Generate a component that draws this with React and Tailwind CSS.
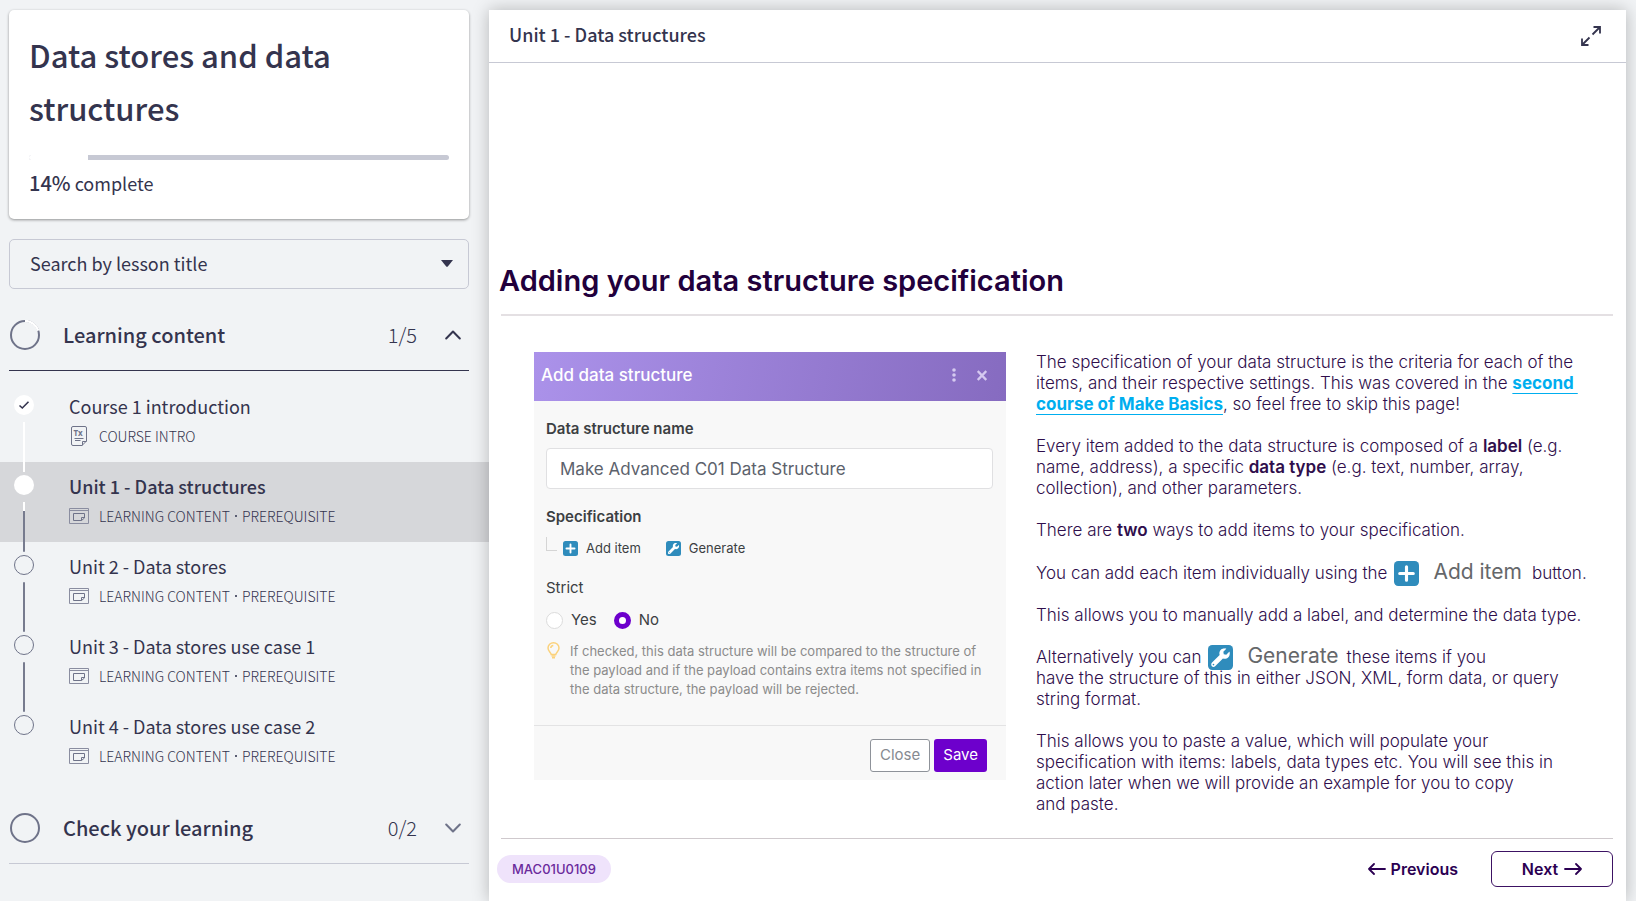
import React from "react";
import { FaWrench } from "react-icons/fa";

const prerequisite = ["LEARNING CONTENT", "PREREQUISITE"];

const lessons = [
  { title: "Course 1 introduction", tags: ["COURSE INTRO"], kind: "doc", state: "done" },
  { title: "Unit 1 - Data structures", tags: prerequisite, kind: "slide", state: "current" },
  { title: "Unit 2 - Data stores", tags: prerequisite, kind: "slide", state: "todo" },
  { title: "Unit 3 - Data stores use case 1", tags: prerequisite, kind: "slide", state: "todo" },
  { title: "Unit 4 - Data stores use case 2", tags: prerequisite, kind: "slide", state: "todo" },
];

function DocIcon() {
  return (
    <svg width="16" height="20" viewBox="0 0 16 20" fill="none" stroke="#6f7389" aria-hidden="true">
      <path d="M2 0.5H14Q15.5 0.5 15.5 2V15L11 19.5H2Q0.5 19.5 0.5 18V2Q0.5 0.5 2 0.5Z" />
      <path d="M15.5 15.5H11.5V19.5M3.5 12.5H12.5M4 14.5H9.5" />
      <text x="2.5" y="10" fontSize="8" fontWeight="700" fill="#6f7389" stroke="none" fontFamily="Noto Sans, sans-serif">Tx</text>
    </svg>
  );
}

function SlideIcon() {
  return (
    <svg width="20" height="16" viewBox="0 0 20 16" fill="none" stroke="#8a8da0" aria-hidden="true">
      <path d="M0.5 0.5H19.5V15.5H0.5ZM0.5 2.5H19.5" />
      <path d="M4.5 5.5H15.5V10L12.5 12.5H4.5ZM15.5 9.5H12.5V12.5" stroke="#6f7389" />
    </svg>
  );
}

function PlusIcon({ className }) {
  return (
    <svg className={className} viewBox="0 0 24 24" aria-hidden="true">
      <rect width="24" height="24" rx="4" fill="#2f8cbc" />
      <path d="M12 5.5V18.5M5.5 12H18.5" stroke="#fff" strokeWidth="3" strokeLinecap="round" />
    </svg>
  );
}

function WrenchIcon({ className }) {
  return (
    <svg className={className} viewBox="0 0 24 24" aria-hidden="true">
      <rect width="24" height="24" rx="4" fill="#2f8cbc" />
      <FaWrench x="3" y="3" size={18} color="#fff" />
    </svg>
  );
}

function Chevron({ up, color }) {
  return (
    <svg width="16" height="10" viewBox="0 0 16 10" fill="none" stroke={color} strokeWidth="2" strokeLinecap="round" strokeLinejoin="round" aria-hidden="true">
      <path d={up ? "M1.2 8.5L8 1.5L14.8 8.5" : "M1.2 1.5L8 8.5L14.8 1.5"} />
    </svg>
  );
}

function Arrow({ back }) {
  return (
    <svg width="18" height="12" viewBox="0 0 18 12" fill="none" stroke="#2b0052" strokeWidth="1.8" strokeLinecap="round" strokeLinejoin="round" aria-hidden="true">
      <path d={back ? "M17 6H1M6 1L1 6L6 11" : "M1 6H17M12 1L17 6L12 11"} />
    </svg>
  );
}

function SectionHeader({ title, count, open, divider }) {
  return (
    <h2 className="mr-5 ml-[9px]">
      <button type="button" aria-expanded={open} className={`flex w-full items-center border-b pt-5 pb-[19px] text-left ${divider}`}>
        <svg className="-my-1 ml-px shrink-0" width="30" height="30" viewBox="0 0 30 30" fill="none" strokeWidth="2" aria-hidden="true">
          <circle cx="15" cy="15" r="14" stroke="#6f7389" />
          {open && <path d="M15 1A14 14 0 0 1 28.3 10.7" stroke="#fff" strokeWidth="2.5" />}
        </svg>
        <span className="ml-[23px] flex-1 text-xl leading-8 font-medium">{title}</span>
        <span className="text-xl leading-8 font-light">{count}</span>
        <span className="mr-2 ml-7"><Chevron up={open} color={open ? "#34344e" : "#6f7389"} /></span>
      </button>
    </h2>
  );
}

function Marker({ state }) {
  if (state === "done") {
    return (
      <svg className="shrink-0" width="20" height="20" viewBox="0 0 20 20" fill="none" aria-hidden="true">
        <circle cx="10" cy="10" r="10" fill="#fff" />
        <path d="M5.5 10.5L8.3 13L14.5 6.8" stroke="#34344e" strokeWidth="1.6" />
      </svg>
    );
  }
  if (state === "current") return <span className="size-5 shrink-0 rounded-full bg-white" />;
  return <span className="size-5 shrink-0 rounded-full border border-[#6f7389]" />;
}

function Lesson({ lesson, last }) {
  const current = lesson.state === "current";
  return (
    <li>
      <a href="#lesson" className={`flex h-20 pl-[14px] ${current ? "bg-[#d6d7da]" : ""}`}>
        <span className="relative z-10 flex w-5 shrink-0 flex-col items-center pt-[13px]">
          <Marker state={lesson.state} />
          {!last && (
            <span className="mt-[7px] -mb-2.5 flex w-0.5 flex-1 flex-col rounded bg-[#777b8e]">
              {lesson.state === "done" && <span className="flex-1 bg-white" />}
              {current && <span className="h-[9px] bg-white" />}
            </span>
          )}
        </span>
        <span className="ml-[35px] pt-[9px]">
          <span className={`block text-lg leading-[30px] ${current ? "font-medium" : "font-normal"}`}>{lesson.title}</span>
          <span className="mt-[5px] flex h-5 items-center text-sm leading-5 font-light">
            <span className="flex w-[30px]">{lesson.kind === "doc" ? <span className="ml-0.5"><DocIcon /></span> : <SlideIcon />}</span>
            {lesson.tags.map((tag, i) => (
              <React.Fragment key={tag}>
                {i > 0 && <span className="mx-[5px]" aria-hidden="true"><svg width="2" height="2" viewBox="0 0 2 2"><rect width="2" height="2" fill="#5a5d72" /></svg></span>}
                <span>{tag}</span>
              </React.Fragment>
            ))}
          </span>
        </span>
      </a>
    </li>
  );
}

function Sidebar() {
  return (
    <aside className="w-[489px] shrink-0 pt-[10px] font-['Noto_Sans_CJK_SC',sans-serif] text-[#34344e]">
      <section className="mr-5 ml-[9px] rounded-[5px] bg-white px-5 pt-[18px] pb-[21px] shadow-[0_1px_3px_rgba(0,0,0,0.4)]">
        <h1 className="text-[31px] leading-[53px] font-medium">Data stores and data structures</h1>
        <div role="progressbar" aria-valuenow={14} aria-label="Course progress" className="mt-[21px] h-[5px] overflow-hidden rounded-full bg-[#c7c9d4]">
          <div className="h-full w-[14%] bg-white" />
        </div>
        <p className="mt-2 h-[30px] text-lg leading-[30px]"><strong className="text-xl leading-[30px] font-medium">14%</strong> complete</p>
      </section>

      <div className="relative mt-5 mr-5 ml-[9px]">
        <select aria-label="Search by lesson title" className="h-[50px] w-full appearance-none rounded-[5px] border border-[#c7c9d4] bg-transparent px-5 pb-[3px] text-lg">
          <option>Search by lesson title</option>
        </select>
        <svg className="pointer-events-none absolute top-[21px] right-4" width="12" height="7" viewBox="0 0 12 7" aria-hidden="true">
          <path d="M0 0H12L6.8 6.4Q6 7.2 5.2 6.4Z" fill="#34344e" />
        </svg>
      </div>

      <div className="mt-[10px]">
        <SectionHeader title="Learning content" count="1/5" open divider="border-[#34344e]" />
        <ul className="mt-[11px]">
          {lessons.map((l, i) => <Lesson key={l.title} lesson={l} last={i === lessons.length - 1} />)}
        </ul>
        <div className="mt-[10px]">
          <SectionHeader title="Check your learning" count="0/2" open={false} divider="border-[#c7c9d4]" />
        </div>
      </div>
    </aside>
  );
}

function DataStructureForm() {
  return (
    <form className="mt-[36px] ml-[33px] w-[472px] shrink-0 self-start bg-[#f8f8f8] text-[#3c3f43]">
      <header className="flex h-[49px] items-center bg-linear-100 from-[#ab92ea] to-[#866bc0] pr-[19px] pb-[3px] pl-[7px] text-white">
        <h3 className="flex-1 text-[17px] leading-6 font-medium">Add data structure</h3>
        <button type="button" aria-label="More options" className="mr-[21px]">
          <svg width="4" height="14" viewBox="0 0 4 14" fill="#d5c9f0" aria-hidden="true">
            <circle cx="2" cy="2" r="1.8" /><circle cx="2" cy="7" r="1.8" /><circle cx="2" cy="12" r="1.8" />
          </svg>
        </button>
        <button type="button" aria-label="Dismiss">
          <svg width="10" height="11" viewBox="0 0 10 11" stroke="#d5c9f0" strokeWidth="2.4" aria-hidden="true"><path d="M0.7 1L9.3 10M9.3 1L0.7 10" /></svg>
        </button>
      </header>

      <div className="pt-[17px] pr-[13px] pb-[26px] pl-3">
        <label htmlFor="ds-name" className="block text-[15px] leading-[22px] font-semibold">Data structure name</label>
        <input id="ds-name" defaultValue="Make Advanced C01 Data Structure" className="mt-2 block h-[41px] w-full rounded-[4px] border border-[#e0e0e2] bg-white px-[13px] text-[17px] text-[#5c626c]" />
        <h4 className="mt-[17px] text-[15px] leading-[22px] font-semibold">Specification</h4>
        <div className="mt-[10px] flex h-5 items-center text-[13px] leading-5">
          <span className="mr-[6px] mb-2 h-[14px] w-[11px] border-b border-l border-[#d5d5d5]" />
          <button type="button" className="flex items-center gap-2"><PlusIcon className="size-[15px]" />Add item</button>
          <button type="button" className="ml-[25px] flex items-center gap-2"><WrenchIcon className="size-[15px]" />Generate</button>
        </div>

        <fieldset className="mt-[19px]">
          <legend className="text-[15px] leading-[22px]">Strict</legend>
          <div className="mt-[10px] flex h-[22px] items-center text-[15px] leading-[22px]">
            <input id="strict-yes" type="radio" name="strict" className="size-[17px] appearance-none rounded-full border border-[#dcdcdc] bg-white checked:border-[5px] checked:border-[#6d00cc]" />
            <label htmlFor="strict-yes" className="ml-2">Yes</label>
            <input id="strict-no" type="radio" name="strict" defaultChecked className="ml-[17px] size-[17px] appearance-none rounded-full border border-[#dcdcdc] bg-white checked:border-[5px] checked:border-[#6d00cc]" />
            <label htmlFor="strict-no" className="ml-2">No</label>
          </div>
        </fieldset>

        <div className="mt-[11px] flex text-[13px] leading-[19px] text-[#8b8b8b]">
          <svg className="mr-[10px] ml-px shrink-0" width="13" height="17" viewBox="0 0 13 17" fill="none" stroke="#fbd27c" strokeWidth="1.5" aria-hidden="true">
            <path d="M4.2 12.5C4 10.5 1 9.4 1 6A5.5 5.2 0 0 1 12 6C12 9.4 9 10.5 8.8 12.5Z" />
            <path d="M3.8 6Q4 3.9 6.3 3.6M4.5 14H8.5M5 15.8H8" />
          </svg>
          <p>
            If checked, this data structure will be compared to the structure of<br />
            the payload and if the payload contains extra items not specified in<br />
            the data structure, the payload will be rejected.
          </p>
        </div>
      </div>

      <footer className="flex justify-end gap-1 border-t border-[#e3e3e4] pt-[13px] pr-[19px] pb-2">
        <button type="button" className="h-[33px] rounded-[3px] border border-[#8e9299] bg-white px-[9px] text-[15px] text-[#868a91]">Close</button>
        <button type="button" className="h-[33px] rounded-[3px] bg-[#6d00cc] px-[9px] text-[15px] text-white">Save</button>
      </footer>
    </form>
  );
}

function Explanation() {
  return (
    <div className="mt-[36px] ml-[30px] flex flex-col gap-[21px] text-[17px] leading-[21px] font-light whitespace-nowrap text-[#2f0e4c]">
      <p>
        The specification of your data structure is the criteria for each of the<br />
        items, and their respective settings. This was covered in the{" "}
        <a href="#basics" className="font-bold text-[#00aeef] underline decoration-1 underline-offset-4">second&nbsp;<br />course of Make Basics</a>
        , so feel free to skip this page!
      </p>
      <p>
        Every item added to the data structure is composed of a <b className="font-semibold">label</b> (e.g.<br />
        name, address), a specific <b className="font-semibold">data type</b> (e.g. text, number, array,<br />
        collection), and other parameters.
      </p>
      <p>There are <b className="font-semibold">two</b> ways to add items to your specification.</p>
      <p className="flex h-[22px] items-center">
        You can add each item individually using the
        <PlusIcon className="ml-[7px] size-[25px]" />
        <span className="mr-[10px] ml-[14px] pb-1 text-[21px] font-normal text-[#65676a]">Add item</span>
        button.
      </p>
      <p>This allows you to manually add a label, and determine the data type.</p>
      <div>
        <p className="flex h-[21px] items-center">
          Alternatively you can
          <WrenchIcon className="ml-[7px] size-[25px]" />
          <span className="mr-2 ml-[14px] pb-1 text-[21px] font-normal text-[#65676a]">Generate</span>
          these items if you
        </p>
        <p>have the structure of this in either JSON, XML, form data, or query<br />string format.</p>
      </div>
      <p>
        This allows you to paste a value, which will populate your<br />
        specification with items: labels, data types etc. You will see this in<br />
        action later when we will provide an example for you to copy<br />
        and paste.
      </p>
    </div>
  );
}

export default function App() {
  return (
    <div className="flex min-h-screen bg-[#f1f3f5]">
      <Sidebar />
      <main className="relative z-20 mt-[10px] mr-[10px] flex min-w-0 flex-1 flex-col bg-white font-['Inter',sans-serif] shadow-[0_0_16px_rgba(0,0,0,0.25)]">
        <header className="flex h-[53px] shrink-0 items-center border-b border-[#c7c9d4] pr-[25px] pl-5">
          <h2 className="flex-1 pb-1 font-['Noto_Sans_CJK_SC',sans-serif] text-lg leading-[30px] font-medium text-[#34344e]">Unit 1 - Data structures</h2>
          <button type="button" aria-label="Full screen">
            <svg width="20" height="20" viewBox="0 0 20 20" fill="none" stroke="#34344e" strokeWidth="1.8" aria-hidden="true">
              <path d="M12.5 1H19V7.5M19 1L11.5 8.5M7.5 19H1V12.5M1 19L8.5 11.5" />
            </svg>
          </button>
        </header>

        <article className="flex flex-col pt-[198px] pr-[13px] pl-3">
          <h1 className="-ml-0.5 text-[29px] leading-10 font-semibold text-[#22003c]">Adding your data structure specification</h1>
          <hr className="mt-[13px] border-t-2 border-[#e4e0e3]" />
          <div className="flex">
            <DataStructureForm />
            <Explanation />
          </div>
          <footer className="mt-[23px] flex items-center border-t border-[#cfc9cd] pt-3">
            <span className="-ml-1 rounded-full bg-[#efe3fb] px-[15px] py-1 text-[13px] leading-5 font-medium text-[#6a2a9c]">MAC01U0109</span>
            <button type="button" className="mr-[33px] ml-auto flex items-center gap-[5px] text-base font-semibold text-[#2b0052]"><Arrow back />Previous</button>
            <button type="button" className="flex h-9 w-[122px] items-center justify-center gap-[6px] rounded-md border border-[#3c1263] text-base font-semibold text-[#2b0052]">Next<Arrow /></button>
          </footer>
        </article>
      </main>
    </div>
  );
}
